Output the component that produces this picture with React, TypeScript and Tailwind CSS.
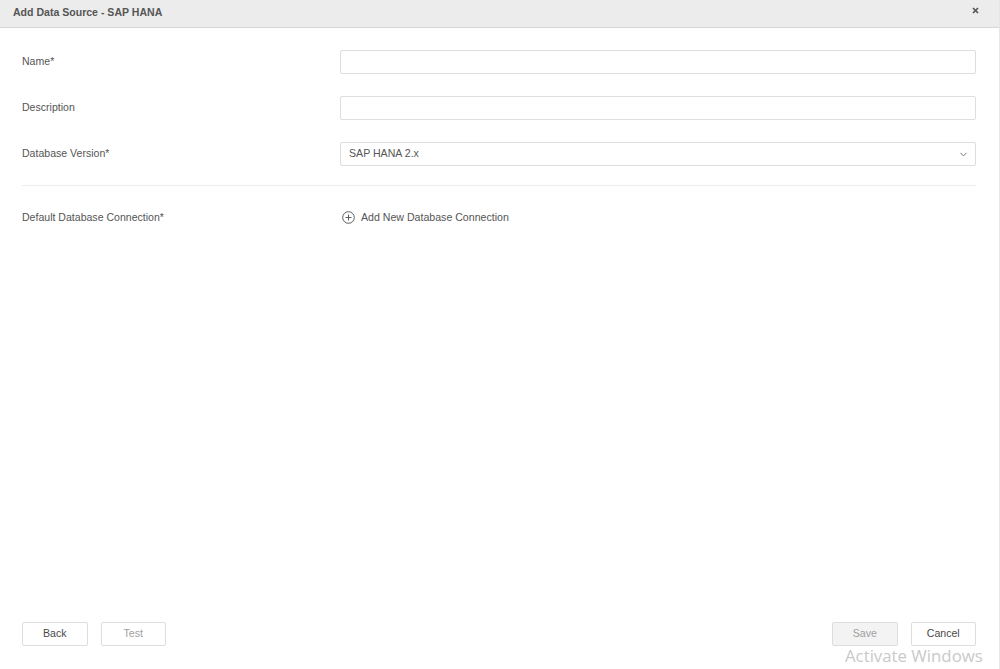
import { ChevronDown } from "lucide-react";

const font = "[font-family:'Liberation_Sans',Arial,sans-serif]";

function Row({ label, children, lift = true }: { label: string; children: React.ReactNode; lift?: boolean }) {
  return (
    <div className="flex items-center h-[24px]">
      <div className={`w-[318px] shrink-0 text-[10.55px] leading-none text-[#555555] ${lift ? "pb-[1px]" : ""}`}>{label}</div>
      <div className="flex-1 min-w-0">{children}</div>
    </div>
  );
}

function Input() {
  return <div className="h-[24px] rounded-[2px] border border-[#dedede] bg-white" />;
}

function Btn({ children, tone }: { children: React.ReactNode; tone: "on" | "off" | "fill" }) {
  const cls =
    tone === "on"
      ? "text-[#484848] bg-white"
      : tone === "off"
      ? "text-[#a0a0a0] bg-white"
      : "text-[#a0a0a0] bg-[#f3f3f3]";
  return (
    <button className={`w-[65.5px] h-[24px] pb-[1px] rounded-[2px] border border-[#dedede] text-[10.6px] leading-none ${cls}`}>
      {children}
    </button>
  );
}

export default function App() {
  return (
    <div className={`${font} relative w-[1000px] h-[669px] bg-white flex flex-col overflow-hidden border-r border-[#e6e6e6]`}>
      <div className="h-[28px] shrink-0 bg-[#ececec] border-b border-[#d6d6d6] flex items-center justify-between pb-[3px] pl-[13px] pr-[20px]">
        <span className="text-[10.55px] font-bold leading-none text-[#555555]">Add Data Source - SAP HANA</span>
        <svg width="7" height="7" viewBox="0 0 7 7" className="mb-[3px]" aria-hidden="true">
          <path d="M1 1L6 6M6 1L1 6" stroke="#555555" strokeWidth="1.7" />
        </svg>
      </div>

      <div className="flex-1 flex flex-col pl-[22px] pr-[23px] pt-[22px] pb-[23px]">
        <div className="flex flex-col gap-[22px]">
          <Row label="Name*"><Input /></Row>
          <Row label="Description"><Input /></Row>
          <Row label="Database Version*">
            <div className="h-[24px] rounded-[2px] border border-[#dedede] bg-white flex items-center justify-between pl-[8px] pr-[6px]">
              <span className="text-[10.6px] leading-none text-[#555555] pb-[1px]">SAP HANA 2.x</span>
              <ChevronDown size={11} strokeWidth={2} className="text-[#666666]" />
            </div>
          </Row>
        </div>

        <div className="h-px bg-[#ececec] mt-[19px] mb-[19px]" />

        <Row label="Default Database Connection*" lift={false}>
          <div className="flex items-center gap-[6px] pl-[2px]">
            <svg width="13" height="13" viewBox="0 0 13 13" aria-hidden="true">
              <circle cx="6.5" cy="6.5" r="5.8" fill="none" stroke="#5c5c5c" strokeWidth="1" />
              <path d="M6.5 3.5V9.5M3.5 6.5H9.5" stroke="#5c5c5c" strokeWidth="1" />
            </svg>
            <span className="text-[10.6px] leading-none text-[#555555]">Add New Database Connection</span>
          </div>
        </Row>

        <div className="mt-auto flex items-center justify-between">
          <div className="flex gap-[13px]">
            <Btn tone="on">Back</Btn>
            <Btn tone="off">Test</Btn>
          </div>
          <div className="flex gap-[13px]">
            <Btn tone="fill">Save</Btn>
            <Btn tone="on">Cancel</Btn>
          </div>
        </div>
      </div>

      <div className="absolute left-[845px] top-[646px] text-[16.8px] leading-[20px] text-[#c9c9c9] font-['Open_Sans',sans-serif] whitespace-nowrap">
        Activate Windows
      </div>
    </div>
  );
}
